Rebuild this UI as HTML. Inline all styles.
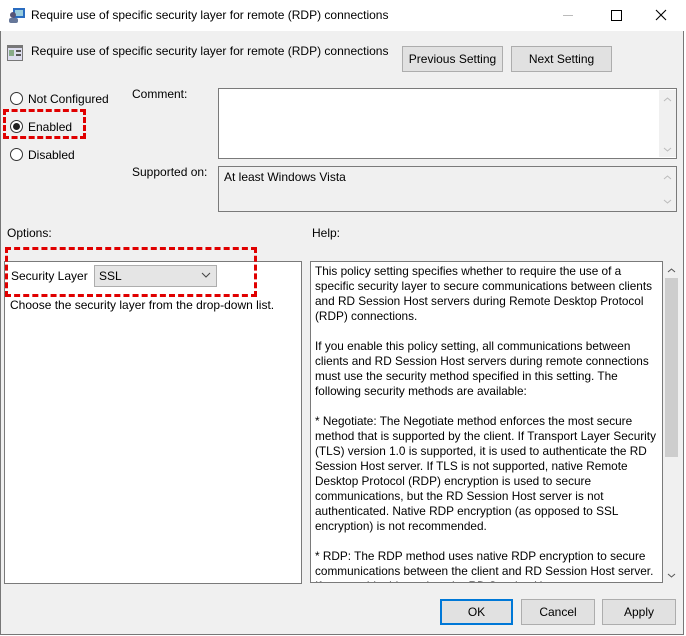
<!DOCTYPE html>
<html><head><style>
*{margin:0;padding:0;box-sizing:border-box}
body{width:686px;height:636px;background:#fff;font-family:"Liberation Sans",sans-serif;font-size:12px;color:#000;position:relative;overflow:hidden}
.a{position:absolute;white-space:nowrap}
.win{position:absolute;left:0;top:0;width:684px;height:635px;background:#f0f0f0;border:1px solid #777;border-top:none}
.btn{position:absolute;background:#e1e1e1;border:1px solid #adadad;text-align:center;font-size:12px}
.radio{position:absolute;width:13px;height:13px;border:1px solid #333;border-radius:50%;background:#fff}
.box{position:absolute;border:1px solid #7a7a7a;background:#fff}
.help div{position:absolute;left:4px;white-space:nowrap;font-size:11.8px}
.dash{position:absolute;border:3px dashed #e00000}
</style></head><body>
<div class="win"></div>
<div class="a" style="left:0;top:0;width:686px;height:31px;background:#fff"></div>
<svg class="a" style="left:8px;top:6px" width="18" height="18"><rect x="5" y="2" width="12" height="10" fill="#2a6cc0"/><rect x="7" y="4" width="8" height="6" fill="#9cd"/><circle cx="5" cy="9" r="3" fill="#557"/><rect x="1" y="12" width="9" height="5" rx="2" fill="#679"/></svg>
<div class="a" style="left:31px;top:8px;font-size:12px">Require use of specific security layer for remote (RDP) connections</div>
<div class="a" style="left:563px;top:15px;width:10px;height:1px;background:#bbb"></div>
<div class="a" style="left:611px;top:10px;width:11px;height:11px;border:1px solid #000"></div>
<svg class="a" style="left:655px;top:9px" width="12" height="12"><path d="M1 1L11 11M11 1L1 11" stroke="#000" stroke-width="1.1"/></svg>
<svg class="a" style="left:7px;top:45px" width="16" height="16"><rect x="0" y="0" width="16" height="16" fill="#777"/><rect x="1" y="3" width="14" height="12" fill="#dde"/><rect x="2" y="5" width="5" height="6" fill="#8a8"/><rect x="9" y="5" width="5" height="2" fill="#555"/><rect x="9" y="9" width="5" height="2" fill="#555"/></svg>
<div class="a" style="left:31px;top:44px">Require use of specific security layer for remote (RDP) connections</div>
<div class="btn" style="left:402px;top:46px;width:101px;height:26px;line-height:24px">Previous Setting</div>
<div class="btn" style="left:511px;top:46px;width:101px;height:26px;line-height:24px">Next Setting</div>
<div class="radio" style="left:10px;top:92px"></div>
<div class="a" style="left:28px;top:92px">Not Configured</div>
<div class="radio" style="left:10px;top:120px"></div>
<div class="a" style="left:13px;top:123px;width:7px;height:7px;border-radius:50%;background:#222"></div>
<div class="a" style="left:28px;top:120px">Enabled</div>
<div class="radio" style="left:10px;top:148px"></div>
<div class="a" style="left:28px;top:148px">Disabled</div>
<div class="dash" style="left:3px;top:109px;width:83px;height:30px"></div>
<div class="a" style="left:132px;top:87px">Comment:</div>
<div class="box" style="left:218px;top:88px;width:459px;height:71px"></div>
<div class="a" style="left:659px;top:90px;width:17px;height:67px;background:#f0f0f0"></div>
<svg class="a" style="left:663px;top:97px" width="9" height="5"><path d="M1 4L4.5 1L8 4" stroke="#bbb" fill="none"/></svg>
<svg class="a" style="left:663px;top:147px" width="9" height="5"><path d="M1 1L4.5 4L8 1" stroke="#bbb" fill="none"/></svg>
<div class="a" style="left:132px;top:165px">Supported on:</div>
<div class="box" style="left:218px;top:166px;width:459px;height:46px;background:#f0f0f0"></div>
<div class="a" style="left:224px;top:170px">At least Windows Vista</div>
<svg class="a" style="left:663px;top:175px" width="9" height="5"><path d="M1 4L4.5 1L8 4" stroke="#bbb" fill="none"/></svg>
<svg class="a" style="left:663px;top:199px" width="9" height="5"><path d="M1 1L4.5 4L8 1" stroke="#bbb" fill="none"/></svg>
<div class="a" style="left:7px;top:226px">Options:</div>
<div class="a" style="left:312px;top:226px">Help:</div>
<div class="box" style="left:4px;top:261px;width:298px;height:323px"></div>
<div class="a" style="left:11px;top:269px">Security Layer</div>
<div class="a" style="left:94px;top:265px;width:123px;height:22px;background:#e5e5e5;border:1px solid #adadad"></div>
<div class="a" style="left:99px;top:269px">SSL</div>
<svg class="a" style="left:201px;top:272px" width="10" height="6"><path d="M1 1L5 5L9 1" stroke="#444" fill="none"/></svg>
<div class="a" style="left:10px;top:298px">Choose the security layer from the drop-down list.</div>
<div class="dash" style="left:5px;top:247px;width:252px;height:50px"></div>
<div class="box help" style="left:310px;top:261px;width:353px;height:322px;overflow:hidden">
<div style="top:2px">This policy setting specifies whether to require the use of a</div>
<div style="top:17px">specific security layer to secure communications between clients</div>
<div style="top:32px">and RD Session Host servers during Remote Desktop Protocol</div>
<div style="top:47px">(RDP) connections.</div>
<div style="top:77px">If you enable this policy setting, all communications between</div>
<div style="top:92px">clients and RD Session Host servers during remote connections</div>
<div style="top:107px">must use the security method specified in this setting. The</div>
<div style="top:122px">following security methods are available:</div>
<div style="top:152px">* Negotiate: The Negotiate method enforces the most secure</div>
<div style="top:167px">method that is supported by the client. If Transport Layer Security</div>
<div style="top:182px">(TLS) version 1.0 is supported, it is used to authenticate the RD</div>
<div style="top:197px">Session Host server. If TLS is not supported, native Remote</div>
<div style="top:212px">Desktop Protocol (RDP) encryption is used to secure</div>
<div style="top:227px">communications, but the RD Session Host server is not</div>
<div style="top:242px">authenticated. Native RDP encryption (as opposed to SSL</div>
<div style="top:257px">encryption) is not recommended.</div>
<div style="top:287px">* RDP: The RDP method uses native RDP encryption to secure</div>
<div style="top:302px">communications between the client and RD Session Host server.</div>
<div style="top:317px">If you enable this setting, the RD Session Host server</div>
</div>
<div class="a" style="left:663px;top:262px;width:17px;height:320px;background:#f0f0f0"></div>
<div class="a" style="left:665px;top:278px;width:13px;height:179px;background:#cdcdcd"></div>
<svg class="a" style="left:667px;top:268px" width="9" height="5"><path d="M1 4L4.5 1L8 4" stroke="#555" fill="none"/></svg>
<svg class="a" style="left:667px;top:573px" width="9" height="5"><path d="M1 1L4.5 4L8 1" stroke="#555" fill="none"/></svg>
<div class="btn" style="left:440px;top:599px;width:73px;height:26px;line-height:22px;border:2px solid #0078d7">OK</div>
<div class="btn" style="left:521px;top:599px;width:74px;height:26px;line-height:24px">Cancel</div>
<div class="btn" style="left:602px;top:599px;width:74px;height:26px;line-height:24px">Apply</div>
</body></html>
